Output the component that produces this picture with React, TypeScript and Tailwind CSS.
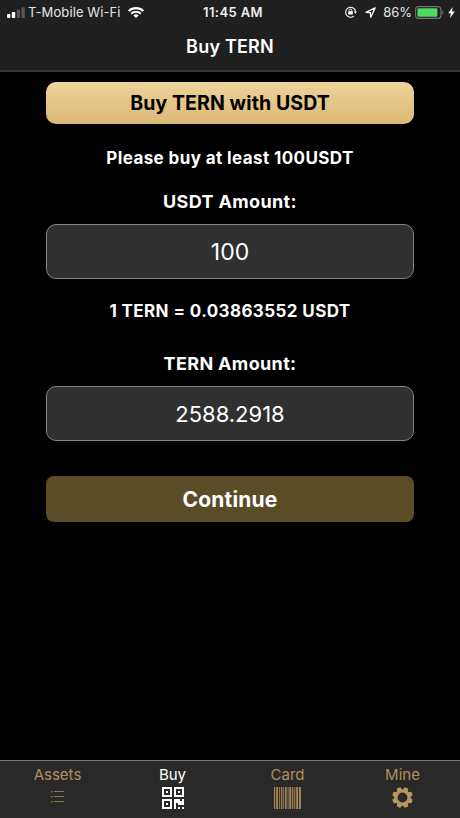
const Signal = () => (
  <svg className="w-[18px] h-[11px] shrink-0" viewBox="0 0 18 11">
    <rect x="0" y="7" width="3.3" height="4" rx="0.8" fill="#fff" />
    <rect x="4.8" y="5" width="3.4" height="6" rx="0.8" fill="#fff" />
    <rect x="9.8" y="2.6" width="3.3" height="8.4" rx="0.8" fill="#555" />
    <rect x="14.5" y="0.2" width="3.3" height="10.8" rx="0.8" fill="#555" />
  </svg>
);

const Wifi = () => (
  <svg className="w-4 h-[11px] shrink-0" viewBox="0 0 16 11" fill="none" stroke="#fff" strokeWidth="2.1">
    <path d="M0.7 4.1a10.4 10.4 0 0 1 14.6 0" />
    <path d="M3.2 6.8a6.8 6.8 0 0 1 9.6 0" />
    <path d="M8 11L5.4 8.5a3.7 3.7 0 0 1 5.2 0z" fill="#fff" stroke="none" />
  </svg>
);

const RotationLock = () => (
  <svg className="w-3 h-3 shrink-0" viewBox="0 0 12 12" fill="none" stroke="#fff">
    <path d="M8.9 10.1A5 5 0 1 1 10.6 5.4" strokeWidth="1.1" />
    <path d="M8.7 5.5h3.3l-1.6 2.2z" fill="#fff" stroke="none" />
    <rect x="3.2" y="5.2" width="4.6" height="3.4" rx="0.4" fill="#fff" stroke="none" />
    <path d="M4.2 5.4V4.3a1.3 1.3 0 0 1 2.6 0v1.1" strokeWidth="0.9" />
  </svg>
);

const Location = () => (
  <svg className="w-[11px] h-[11px] shrink-0" viewBox="0 0 11 11" fill="none" stroke="#fff" strokeWidth="1.3" strokeLinejoin="round">
    <path d="M10.1 0.9L0.9 5.3l4.5 0.4 0.4 4.5z" />
  </svg>
);

const Battery = () => (
  <svg className="w-[29px] h-[13px] shrink-0" viewBox="0 0 29 13">
    <rect x="0.6" y="0.6" width="25.3" height="11.8" rx="3" fill="none" stroke="#747474" strokeWidth="1.1" />
    <rect x="2.4" y="2.3" width="20" height="8.4" rx="1.2" fill="#4cd964" />
    <path d="M27.2 4.4c1.4 0.6 1.4 3.6 0 4.2z" fill="#747474" />
  </svg>
);

const Bolt = () => (
  <svg className="w-[7px] h-[11px] shrink-0" viewBox="0 0 7 11">
    <path d="M4.6 0L0.2 6.2h2.6L2.1 11 6.8 4.4H4z" fill="#fff" />
  </svg>
);

const ListIcon = () => (
  <svg className="w-[13px] h-[13px]" viewBox="0 0 13 13" fill="#8f754d">
    <path d="M0 0h1.5v1.5H0zM0 5h1.5v1.5H0zM0 10h1.5v1.5H0z" />
    <path d="M3 0h10v1H3zM3 5h10v1H3zM3 10h10v1H3z" />
  </svg>
);

const QrIcon = () => (
  <svg className="w-[22px] h-[22px]" viewBox="0 0 22 22" fill="#fff">
    <path fillRule="evenodd" d="M0 0h10v10H0zM2 2v6h6V2zM12 0h10v10H12zM14 2v6h6V2zM0 12h10v10H0zM2 14v6h6v-6z" />
    <path d="M4 4h2v2H4zM16 4h2v2h-2zM4 16h2v2H4z" />
    <path d="M12 12h6v2h2v-2h2v6h-6v-2h-2v6h-2zM16 20h2v2h-2zM20 20h2v2h-2z" />
  </svg>
);

const BarcodeIcon = () => (
  <svg className="w-[27px] h-[22px]" viewBox="0 0 27 22" fill="#a58558">
    <path d="M0 0h1.2v22H0zM2.2 0h1.8v22H2.2zM5.2 0h0.9v22H5.2zM7.1 0h1.3v22H7.1zM9.3 0h0.8v22H9.3zM11.1 0h1.6v22h-1.6zM13.7 0h0.8v22h-0.8zM15.3 0h1.9v22h-1.9zM18.1 0h1.2v22h-1.2zM20.3 0h1v22h-1zM22.2 0h1.9v22h-1.9zM25 0h1.9v22H25z" />
  </svg>
);

const GearIcon = () => (
  <svg className="w-[21px] h-[21px]" viewBox="-10.5 -10.5 21 21">
    <g fill="#b9965f">
      {[22.5, 67.5, 112.5, 157.5, 202.5, 247.5, 292.5, 337.5].map((angle) => (
        <path key={angle} d="M-3.1 -6.4L-1.9 -10.2Q0 -10.8 1.9 -10.2L3.1 -6.4z" transform={`rotate(${angle})`} />
      ))}
    </g>
    <circle r="6.5" fill="none" stroke="#b9965f" strokeWidth="3.2" />
  </svg>
);

const tabs = [
  { label: 'Assets', icon: <ListIcon />, active: false },
  { label: 'Buy', icon: <QrIcon />, active: true },
  { label: 'Card', icon: <BarcodeIcon />, active: false },
  { label: 'Mine', icon: <GearIcon />, active: false },
];

const App = () => {
  return (
    <div className="w-full h-[818px] flex flex-col bg-black text-white font-['Inter',sans-serif] overflow-hidden">
      {/* Status bar and title */}
      <header className="h-[72px] shrink-0 bg-[#1f1f1f] border-b-2 border-[#353535]">
        <div className="h-6 grid grid-cols-[1fr_auto_1fr] items-center pl-[7px] pr-[5px] text-[13px] leading-6">
          <div className="flex items-center">
            <Signal />
            <span className="ml-[3px] tracking-[0.1px] text-[#e6e6e6]">T-Mobile Wi-Fi</span>
            <span className="ml-[7px] flex"><Wifi /></span>
          </div>
          <span className="ml-1 font-semibold tracking-[0.4px] text-[#eee]">11:45 AM</span>
          <div className="flex items-center justify-end">
            <RotationLock />
            <span className="ml-2 flex"><Location /></span>
            <span className="ml-[7px] text-[#e6e6e6]">86%</span>
            <span className="ml-[3px] flex"><Battery /></span>
            <span className="ml-1 flex"><Bolt /></span>
          </div>
        </div>
        <h1 className="h-[46px] text-center text-[18px] leading-[45px] font-semibold tracking-[0.2px]">Buy TERN</h1>
      </header>

      {/* Purchase form */}
      <main className="flex-1 flex flex-col px-[46px] pt-2.5 text-center">
        <button className="h-[42px] rounded-[10px] bg-gradient-to-b from-[#ecd39b] to-[#ddb875] pt-0.5 text-black text-[19.5px] font-bold tracking-[0.1px]">
          Buy TERN with USDT
        </button>
        <p className="mt-[21px] h-6 text-[17px] leading-[26px] font-bold tracking-[0.4px]">Please buy at least 100USDT</p>
        <label className="mt-5 h-6 text-[18px] leading-[26px] font-bold tracking-[0.35px]">USDT Amount:</label>
        <input className="mt-[11px] h-[55px] rounded-[10px] border border-[#858585] bg-[#303030] text-center text-[23px] outline-none" defaultValue="100" />
        <p className="mt-[19px] h-6 text-[17px] leading-[26px] font-bold tracking-[0.4px]">1 TERN = 0.03863552 USDT</p>
        <label className="mt-[29px] h-6 text-[18px] leading-[26px] font-bold tracking-[0.35px]">TERN Amount:</label>
        <input className="mt-[11px] h-[55px] rounded-[10px] border border-[#858585] bg-[#303030] text-center text-[22px] outline-none" defaultValue="2588.2918" />
        <button className="mt-[35px] h-[46px] rounded-[8px] bg-[#5b4b27] pt-0.5 text-[21px] font-bold tracking-[0.2px]">Continue</button>
      </main>

      {/* Tab bar */}
      <nav className="h-[58px] shrink-0 grid grid-cols-4 bg-[#292929] border-t border-[#777]">
        {tabs.map((tab) => (
          <div key={tab.label} className={tab.active ? 'flex flex-col items-center text-white' : 'flex flex-col items-center text-[#b18f5e]'}>
            <span className="mt-1 h-[21px] text-[15px] leading-5">{tab.label}</span>
            <span className="h-[23px] flex items-center">{tab.icon}</span>
          </div>
        ))}
      </nav>
    </div>
  );
};

export default App;
